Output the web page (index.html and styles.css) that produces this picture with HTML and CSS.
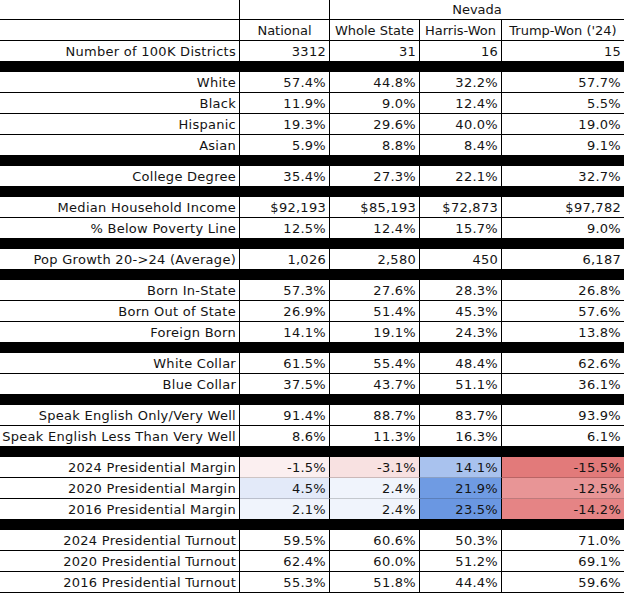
FILE: index.html
```html
<!DOCTYPE html>
<html>
<head>
<meta charset="utf-8">
<link rel="stylesheet" href="styles.css">
</head>
<body>
<div class="sheet">
  <div class="row top">
    <div class="cell"></div>
    <div class="cell"></div>
    <div class="cell span3 center">Nevada</div>
  </div>
  <div class="row">
    <div class="cell"></div>
    <div class="cell center">National</div>
    <div class="cell center">Whole State</div>
    <div class="cell center">Harris-Won</div>
    <div class="cell center">Trump-Won ('24)</div>
  </div>
  <div class="row">
    <div class="cell">Number of 100K Districts</div>
    <div class="cell">3312</div><div class="cell">31</div><div class="cell">16</div><div class="cell">15</div>
  </div>
  <div class="bar"></div>
  <div class="row"><div class="cell">White</div><div class="cell">57.4%</div><div class="cell">44.8%</div><div class="cell">32.2%</div><div class="cell">57.7%</div></div>
  <div class="row"><div class="cell">Black</div><div class="cell">11.9%</div><div class="cell">9.0%</div><div class="cell">12.4%</div><div class="cell">5.5%</div></div>
  <div class="row"><div class="cell">Hispanic</div><div class="cell">19.3%</div><div class="cell">29.6%</div><div class="cell">40.0%</div><div class="cell">19.0%</div></div>
  <div class="row"><div class="cell">Asian</div><div class="cell">5.9%</div><div class="cell">8.8%</div><div class="cell">8.4%</div><div class="cell">9.1%</div></div>
  <div class="bar"></div>
  <div class="row"><div class="cell">College Degree</div><div class="cell">35.4%</div><div class="cell">27.3%</div><div class="cell">22.1%</div><div class="cell">32.7%</div></div>
  <div class="bar"></div>
  <div class="row"><div class="cell">Median Household Income</div><div class="cell">$92,193</div><div class="cell">$85,193</div><div class="cell">$72,873</div><div class="cell">$97,782</div></div>
  <div class="row"><div class="cell">% Below Poverty Line</div><div class="cell">12.5%</div><div class="cell">12.4%</div><div class="cell">15.7%</div><div class="cell">9.0%</div></div>
  <div class="bar"></div>
  <div class="row"><div class="cell">Pop Growth 20-&gt;24 (Average)</div><div class="cell">1,026</div><div class="cell">2,580</div><div class="cell">450</div><div class="cell">6,187</div></div>
  <div class="bar"></div>
  <div class="row"><div class="cell">Born In-State</div><div class="cell">57.3%</div><div class="cell">27.6%</div><div class="cell">28.3%</div><div class="cell">26.8%</div></div>
  <div class="row"><div class="cell">Born Out of State</div><div class="cell">26.9%</div><div class="cell">51.4%</div><div class="cell">45.3%</div><div class="cell">57.6%</div></div>
  <div class="row"><div class="cell">Foreign Born</div><div class="cell">14.1%</div><div class="cell">19.1%</div><div class="cell">24.3%</div><div class="cell">13.8%</div></div>
  <div class="bar"></div>
  <div class="row"><div class="cell">White Collar</div><div class="cell">61.5%</div><div class="cell">55.4%</div><div class="cell">48.4%</div><div class="cell">62.6%</div></div>
  <div class="row"><div class="cell">Blue Collar</div><div class="cell">37.5%</div><div class="cell">43.7%</div><div class="cell">51.1%</div><div class="cell">36.1%</div></div>
  <div class="bar"></div>
  <div class="row"><div class="cell">Speak English Only/Very Well</div><div class="cell">91.4%</div><div class="cell">88.7%</div><div class="cell">83.7%</div><div class="cell">93.9%</div></div>
  <div class="row"><div class="cell">Speak English Less Than Very Well</div><div class="cell">8.6%</div><div class="cell">11.3%</div><div class="cell">16.3%</div><div class="cell">6.1%</div></div>
  <div class="bar"></div>
  <div class="row margin"><div class="cell">2024 Presidential Margin</div><div class="cell heat c-n24">-1.5%</div><div class="cell heat c-s24">-3.1%</div><div class="cell heat c-h24">14.1%</div><div class="cell heat c-t24">-15.5%</div></div>
  <div class="row margin"><div class="cell">2020 Presidential Margin</div><div class="cell heat c-n20">4.5%</div><div class="cell heat c-s20">2.4%</div><div class="cell heat c-h20">21.9%</div><div class="cell heat c-t20">-12.5%</div></div>
  <div class="row"><div class="cell">2016 Presidential Margin</div><div class="cell c-n16">2.1%</div><div class="cell c-s16">2.4%</div><div class="cell c-h16">23.5%</div><div class="cell c-t16">-14.2%</div></div>
  <div class="bar"></div>
  <div class="row"><div class="cell">2024 Presidential Turnout</div><div class="cell">59.5%</div><div class="cell">60.6%</div><div class="cell">50.3%</div><div class="cell">71.0%</div></div>
  <div class="row"><div class="cell">2020 Presidential Turnout</div><div class="cell">62.4%</div><div class="cell">60.0%</div><div class="cell">51.2%</div><div class="cell">69.1%</div></div>
  <div class="row"><div class="cell">2016 Presidential Turnout</div><div class="cell">55.3%</div><div class="cell">51.8%</div><div class="cell">44.4%</div><div class="cell">59.6%</div></div>
</div>
</body>
</html>
```
FILE: styles.css
```css
html, body {
  margin: 0;
  padding: 0;
  background: #fff;
}
.sheet {
  width: 624px;
  display: flex;
  flex-direction: column;
  font-family: "DejaVu Sans", Verdana, sans-serif;
  font-size: 13px;
  letter-spacing: 0.27px;
  color: #141414;
  overflow: hidden;
}
.row {
  display: grid;
  grid-template-columns: 240px 90px 90px 82px 122px;
  height: 21px;
}
.row.top {
  height: 20px;
}
.cell {
  box-sizing: border-box;
  border-right: 1px solid #000;
  border-bottom: 1px solid #000;
  padding: 1px 3px 0 0;
  text-align: right;
  line-height: 20px;
  white-space: nowrap;
  overflow: hidden;
}
.row.top .cell {
  padding-top: 0;
  line-height: 19px;
}
.row .cell:last-child {
  border-right: none;
}
.center {
  text-align: center;
  padding-right: 0;
  letter-spacing: 0;
}
.span3 {
  grid-column: 3 / 6;
}
.bar {
  height: 10px;
  background: #000;
}
.margin .heat {
  border-bottom-color: rgba(0, 0, 0, 0.18);
}
.c-n24 { background: #fbeff0; }
.c-s24 { background: #f8e1e1; }
.c-h24 { background: #a9c2ee; }
.c-t24 { background: #e27a7a; }
.c-n20 { background: #e3eaf9; }
.c-s20 { background: #f0f4fc; }
.c-h20 { background: #6f9be3; }
.c-t20 { background: #e89596; }
.c-n16 { background: #f0f4fc; }
.c-s16 { background: #f0f4fc; }
.c-h16 { background: #6a97e2; }
.c-t16 { background: #e58485; }
```
